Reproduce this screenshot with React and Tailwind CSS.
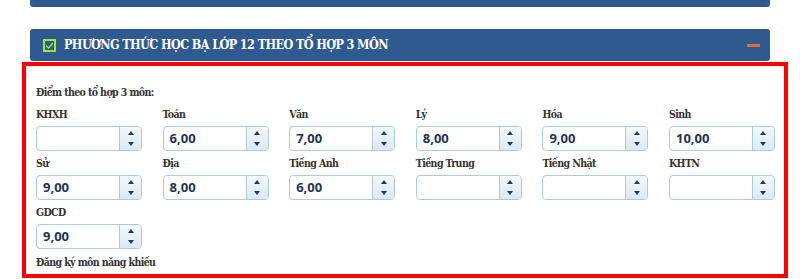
const rows = [
  [
    { label: 'KHXH', value: '' },
    { label: 'Toán', value: '6,00' },
    { label: 'Văn', value: '7,00' },
    { label: 'Lý', value: '8,00' },
    { label: 'Hóa', value: '9,00' },
    { label: 'Sinh', value: '10,00' },
  ],
  [
    { label: 'Sử', value: '9,00' },
    { label: 'Địa', value: '8,00' },
    { label: 'Tiếng Anh', value: '6,00' },
    { label: 'Tiếng Trung', value: '' },
    { label: 'Tiếng Nhật', value: '' },
    { label: 'KHTN', value: '' },
  ],
  [{ label: 'GDCD', value: '9,00' }],
];

const slab = {
  fontFamily: '"DejaVu Serif Condensed", "DejaVu Serif", serif',
  fontStretch: 'condensed',
};

const Spinner = ({ value }) => (
  <div className="flex h-[25px] w-[106px] overflow-hidden rounded-[4px] border border-[#a9cbe0] bg-white">
    <div
      className="flex flex-1 items-center pl-[6px] text-[13px] font-bold text-[#1c3553]"
      style={{ fontFamily: '"Open Sans", sans-serif' }}
    >
      {value}
    </div>
    <div className="flex w-[22px] flex-col items-center justify-center gap-[7px] border-l border-[#a9cbe0] bg-gradient-to-b from-[#f2f8fc] to-[#dce9f2]">
      <span className="h-0 w-0 border-x-[3px] border-b-[4px] border-x-transparent border-b-[#1d3a5c]" />
      <span className="h-0 w-0 border-x-[3px] border-t-[4px] border-x-transparent border-t-[#1d3a5c]" />
    </div>
  </div>
);

const Label = ({ children, className = '' }) => (
  <div
    className={`text-[10.5px] font-bold leading-[15px] tracking-[-0.6px] text-[#333] ${className}`}
    style={slab}
  >
    {children}
  </div>
);

export default function App() {
  return (
    <div className="h-[279px] w-[800px] overflow-hidden bg-white">
      <div className="mx-[30px] h-[7px] rounded-b-[3px] bg-[#2e5a8f]" />

      <div className="mx-[30px] mt-[22px] flex h-[32px] items-center rounded-[3px] bg-[#2e5a8f] pl-[13px] pr-[10px]">
        <span className="flex h-[13px] w-[13px] items-center justify-center border-2 border-[#9be53d]">
          <svg viewBox="0 0 12 12" className="h-[9px] w-[9px]" fill="none" stroke="#9be53d" strokeWidth="2">
            <path d="M1.5 6.3 L4.8 9.2 L10.5 2.8" />
          </svg>
        </span>
        <span
          className="ml-[8px] text-[12.5px] font-bold uppercase tracking-[-0.6px] text-white"
          style={slab}
        >
          Phương thức học bạ lớp 12 theo tổ hợp 3 môn
        </span>
        <span className="ml-auto h-[3px] w-[13px] bg-[#f0652c]" />
      </div>

      <div className="ml-[22px] mt-[1px] h-[216px] w-[766px] border-4 border-[#ff0000] pl-[10px] pt-[18px]">
        <Label className="leading-[16px]">Điểm theo tổ hợp 3 môn:</Label>
        <div className="mt-[7px] flex flex-col gap-[5px]">
          {rows.map((row, i) => (
            <div key={i} className="grid grid-cols-[repeat(6,126.6px)]">
              {row.map((f) => (
                <div key={f.label} className="flex flex-col gap-[4px]">
                  <Label>{f.label}</Label>
                  <Spinner value={f.value} />
                </div>
              ))}
            </div>
          ))}
        </div>
        <Label className="mt-[5px] leading-[16px]">Đăng ký môn năng khiếu</Label>
      </div>
    </div>
  );
}
